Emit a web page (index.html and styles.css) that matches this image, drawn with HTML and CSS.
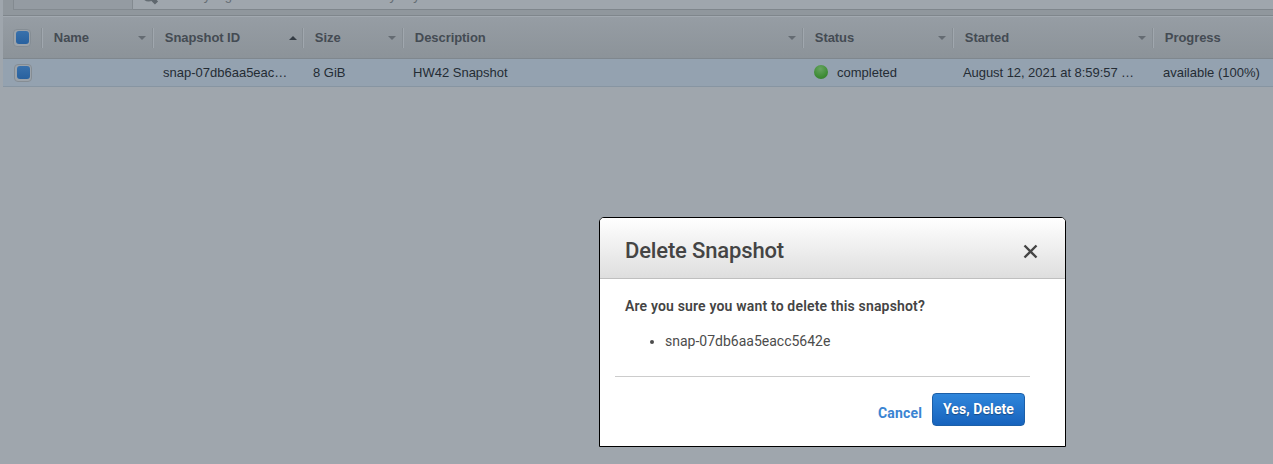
FILE: index.html
```html
<!DOCTYPE html>
<html lang="en">
<head>
<meta charset="utf-8">
<title>Snapshots</title>
<link rel="stylesheet" href="styles.css">
</head>
<body>
<main class="page">
  <div class="toolbar">
    <div class="scope"></div>
    <div class="search">
      <svg class="lens" width="18" height="18" viewBox="0 0 18 18"><circle cx="6.500" cy="7" r="5.500" fill="none" stroke="#656d74" stroke-width="2"/><path d="M10.500 11 14.500 15" stroke="#5f676e" stroke-width="4.500"/></svg>
      <span class="hint">Filter by tags and attributes or search by keyword</span>
    </div>
  </div>
  <div class="row head">
    <div class="cell check"><span class="box"></span></div>
    <div class="cell">Name<i class="arrow"></i></div>
    <div class="cell">Snapshot ID<i class="arrow up"></i></div>
    <div class="cell">Size<i class="arrow"></i></div>
    <div class="cell">Description<i class="arrow"></i></div>
    <div class="cell">Status<i class="arrow"></i></div>
    <div class="cell">Started<i class="arrow"></i></div>
    <div class="cell">Progress</div>
  </div>
  <div class="row data">
    <div class="cell check"><span class="box"></span></div>
    <div class="cell"></div>
    <div class="cell">snap-07db6aa5eac…</div>
    <div class="cell">8 GiB</div>
    <div class="cell">HW42 Snapshot</div>
    <div class="cell"><span class="dot"></span>completed</div>
    <div class="cell date">August 12, 2021 at 8:59:57 …</div>
    <div class="cell">available (100%)</div>
  </div>
</main>
<section class="dialog" role="dialog">
  <header class="title-bar">
    <h1 class="title">Delete Snapshot</h1>
    <svg class="close" width="15" height="15" viewBox="0 0 15 15"><path d="M1.500 1.500 13.500 13.500M13.500 1.500 1.500 13.500" stroke="#444" stroke-width="2.400" fill="none"/></svg>
  </header>
  <div class="content">
    <p class="question">Are you sure you want to delete this snapshot?</p>
    <ul class="items"><li>snap-07db6aa5eacc5642e</li></ul>
  </div>
  <footer class="actions">
    <a class="cancel">Cancel</a>
    <button class="confirm">Yes, Delete</button>
  </footer>
</section>
</body>
</html>
```
FILE: styles.css
```css
* { box-sizing: border-box; }
body {
  margin: 0;
  height: 464px;
  overflow: hidden;
  background: #9fa6ad;
  font: 13px/15px "Liberation Sans", Arial, sans-serif;
}
.page { padding-left: 3px; }
.toolbar {
  display: flex;
  height: 16px;
  padding: 0 0 6px 10px;
  background: #90979d;
  border-bottom: 1px solid #7f868c;
}
.scope {
  width: 120px;
  height: 10px;
  background: #949ba2;
  border: solid #838a90;
  border-width: 0 1px 1px;
}
.search {
  flex: 1;
  height: 10px;
  display: flex;
  align-items: flex-end;
  overflow: hidden;
  background: #9fa6ad;
  border-bottom: 1px solid #7f868c;
  color: #656d74;
}
.lens { flex: none; margin: 0 0 3px 9px; }
.hint { margin: 0 0 6px 4px; white-space: nowrap; }
.row {
  display: grid;
  grid-template-columns: 39px 111px 150px 100px 400px 150px 200px 1fr;
  align-items: center;
}
.cell {
  display: flex;
  align-items: center;
  white-space: nowrap;
}
.head {
  height: 43px;
  background: linear-gradient(#969da4, #8c9399);
  border-top: 1px solid #a2a9b0;
  border-bottom: 1px solid #7f878e;
  color: #444b53;
  font-weight: bold;
  letter-spacing: -0.06px;
}
.head .cell {
  height: 20px;
  padding-left: 10.800px;
  border-left: 1px solid #a0a7ae;
  box-shadow: -1px 0 #878e94;
}
.head .check { border: 0; box-shadow: none; padding-left: 10px; }
.data {
  height: 28px;
  background: #94a2b0;
  border-bottom: 1px solid #8795a2;
  color: #242c34;
}
.data .cell { padding-left: 10px; }
.data .check { padding-left: 11px; }
.data .date { letter-spacing: -0.06px; }
.box {
  display: grid;
  place-items: center;
  width: 18px;
  height: 18px;
  border: 1px solid #858d94;
  border-radius: 4px;
  background: #9ca3aa;
}
.box::before {
  content: "";
  width: 13px;
  height: 13px;
  border-radius: 3px;
  background: linear-gradient(#3971ac, #28619f);
}
.arrow {
  margin: 1px 7px 0 auto;
  border: solid transparent;
  border-width: 4px 4px 0;
  border-top-color: #646b72;
}
.arrow.up {
  margin-right: 6px;
  border-width: 0 4px 4px;
  border-bottom-color: #343c44;
}
.dot {
  width: 14px;
  height: 14px;
  margin: 0 9px 1px 1px;
  border-radius: 50%;
  background: radial-gradient(circle at 45% 28%, #67a461, #3d8b34 65%, #327728);
}
.dialog {
  position: absolute;
  left: 599px;
  top: 217px;
  width: 467px;
  height: 230px;
  border: 1px solid #000;
  border-radius: 5px 5px 0 0;
  background: #fff;
  color: #444;
  font-family: Roboto, sans-serif;
  font-size: 14px;
  line-height: 20px;
}
.title-bar {
  display: flex;
  align-items: center;
  justify-content: space-between;
  height: 61px;
  padding: 6px 27px 0 25px;
  border-bottom: 1px solid #bfbfbf;
  border-radius: 4px 4px 0 0;
  background: linear-gradient(#fff, #dedede);
}
.title { margin: 0; font-size: 22px; line-height: 26px; font-weight: 500; letter-spacing: -0.15px; }
.close { margin-top: 1px; }
.content {
  height: 98px;
  margin: 0 35px 0 15px;
  padding: 17px 10px 0;
  border-bottom: 1px solid #ccc;
}
.question { margin: 0; font-weight: 600; letter-spacing: 0.17px; }
.items { margin: 15px 0 0; padding-left: 40px; }
.items li { color: #4c4c4c; }
.actions {
  display: flex;
  justify-content: flex-end;
  gap: 10px;
  padding: 16px 40px 0 0;
}
.cancel { margin-top: 10px; color: #3a84d2; font-weight: 700; letter-spacing: 0.15px; }
.confirm {
  width: 93px;
  height: 33px;
  padding: 0 0 1px;
  border: 1px solid #1c5fa8;
  border-radius: 4px;
  background: linear-gradient(#2f86db, #1763bd);
  color: #fff;
  font: 700 14px/20px Roboto, sans-serif;
  letter-spacing: 0.08px;
  text-shadow: 0 1px 1px #174a85;
}
```
